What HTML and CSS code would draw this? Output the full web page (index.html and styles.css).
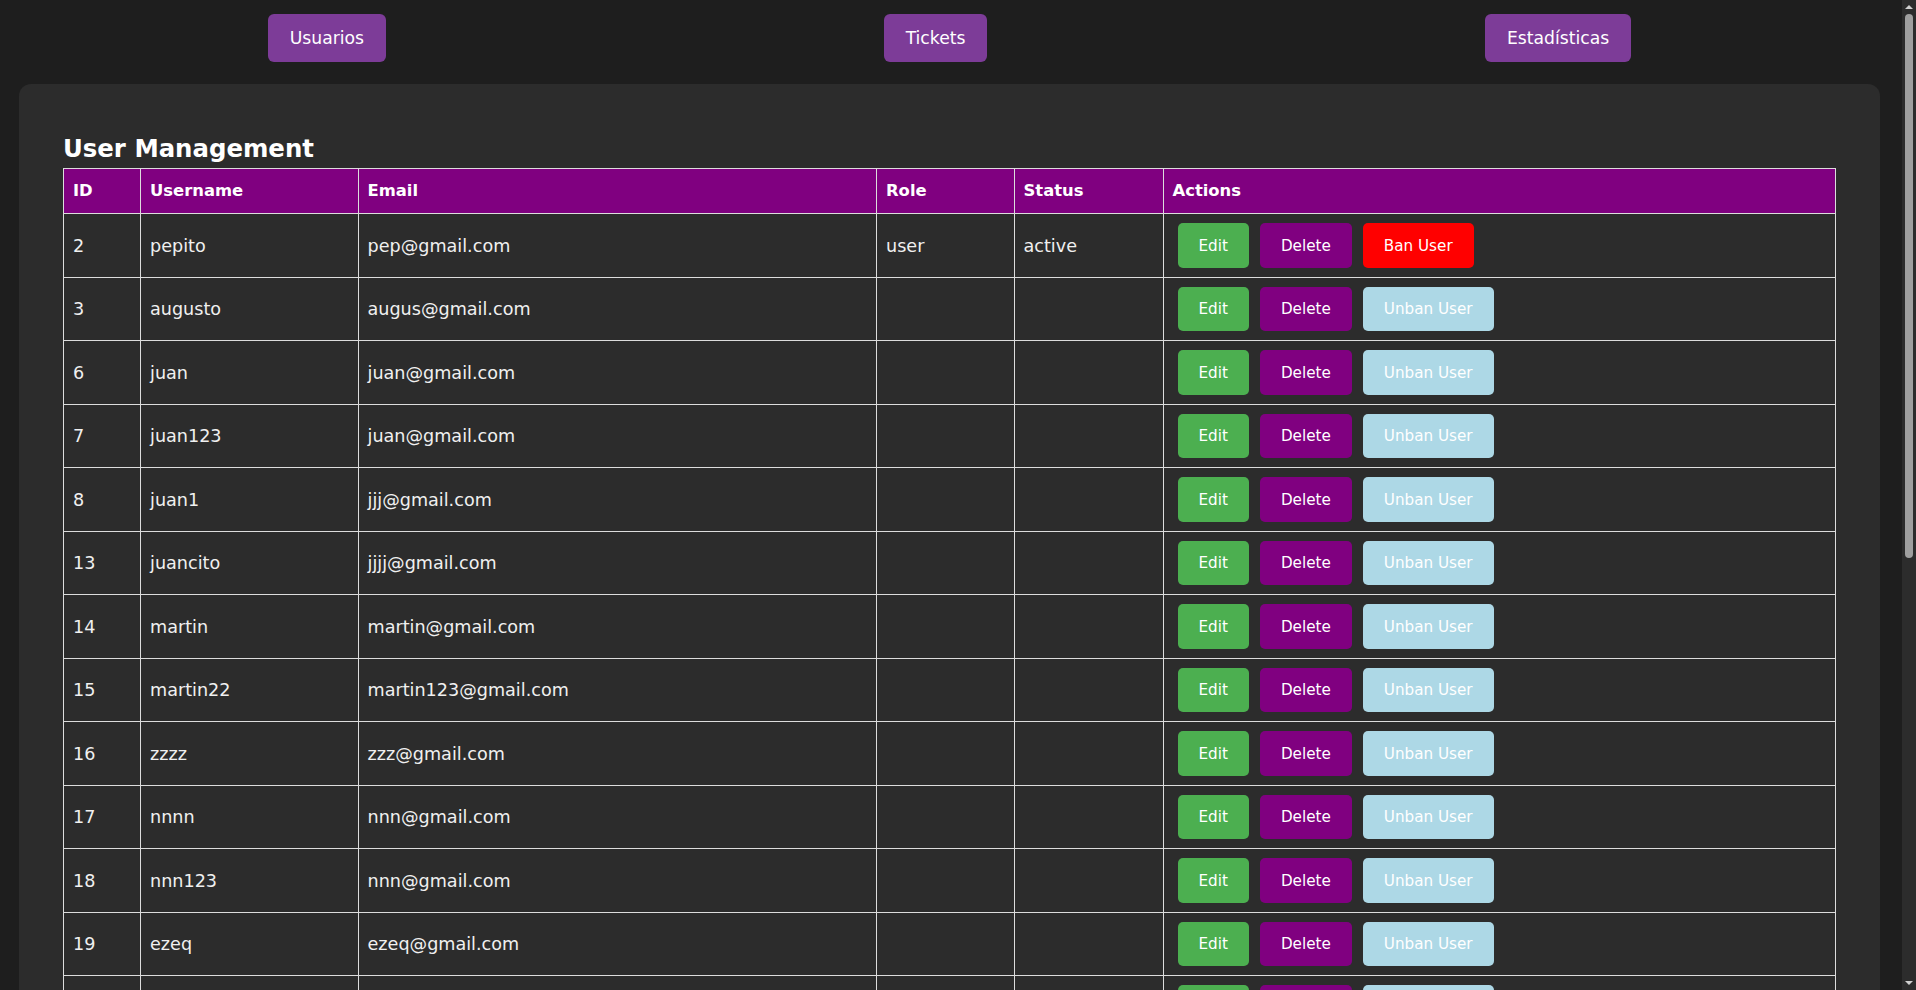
FILE: index.html
```html
<!DOCTYPE html>
<html lang="es">
<head>
<meta charset="utf-8">
<title>User Management</title>
<link rel="stylesheet" href="styles.css">
</head>
<body>
<div class="page">
  <nav class="nav">
    <button class="nav-btn">Usuarios</button>
    <button class="nav-btn">Tickets</button>
    <button class="nav-btn">Estadísticas</button>
  </nav>
  <main class="card">
    <h2 class="title">User Management</h2>
    <table class="users">
      <colgroup>
        <col class="c-id"><col class="c-user"><col class="c-email"><col class="c-role"><col class="c-status"><col class="c-actions">
      </colgroup>
      <thead>
        <tr><th>ID</th><th>Username</th><th>Email</th><th>Role</th><th>Status</th><th>Actions</th></tr>
      </thead>
      <tbody>
        <tr><td>2</td><td>pepito</td><td>pep@gmail.com</td><td>user</td><td>active</td><td><div class="actions"><button class="btn edit">Edit</button><button class="btn delete">Delete</button><button class="btn ban">Ban User</button></div></td></tr>
        <tr><td>3</td><td>augusto</td><td>augus@gmail.com</td><td></td><td></td><td><div class="actions"><button class="btn edit">Edit</button><button class="btn delete">Delete</button><button class="btn unban">Unban User</button></div></td></tr>
        <tr><td>6</td><td>juan</td><td>juan@gmail.com</td><td></td><td></td><td><div class="actions"><button class="btn edit">Edit</button><button class="btn delete">Delete</button><button class="btn unban">Unban User</button></div></td></tr>
        <tr><td>7</td><td>juan123</td><td>juan@gmail.com</td><td></td><td></td><td><div class="actions"><button class="btn edit">Edit</button><button class="btn delete">Delete</button><button class="btn unban">Unban User</button></div></td></tr>
        <tr><td>8</td><td>juan1</td><td>jjj@gmail.com</td><td></td><td></td><td><div class="actions"><button class="btn edit">Edit</button><button class="btn delete">Delete</button><button class="btn unban">Unban User</button></div></td></tr>
        <tr><td>13</td><td>juancito</td><td>jjjj@gmail.com</td><td></td><td></td><td><div class="actions"><button class="btn edit">Edit</button><button class="btn delete">Delete</button><button class="btn unban">Unban User</button></div></td></tr>
        <tr><td>14</td><td>martin</td><td>martin@gmail.com</td><td></td><td></td><td><div class="actions"><button class="btn edit">Edit</button><button class="btn delete">Delete</button><button class="btn unban">Unban User</button></div></td></tr>
        <tr><td>15</td><td>martin22</td><td>martin123@gmail.com</td><td></td><td></td><td><div class="actions"><button class="btn edit">Edit</button><button class="btn delete">Delete</button><button class="btn unban">Unban User</button></div></td></tr>
        <tr><td>16</td><td>zzzz</td><td>zzz@gmail.com</td><td></td><td></td><td><div class="actions"><button class="btn edit">Edit</button><button class="btn delete">Delete</button><button class="btn unban">Unban User</button></div></td></tr>
        <tr><td>17</td><td>nnnn</td><td>nnn@gmail.com</td><td></td><td></td><td><div class="actions"><button class="btn edit">Edit</button><button class="btn delete">Delete</button><button class="btn unban">Unban User</button></div></td></tr>
        <tr><td>18</td><td>nnn123</td><td>nnn@gmail.com</td><td></td><td></td><td><div class="actions"><button class="btn edit">Edit</button><button class="btn delete">Delete</button><button class="btn unban">Unban User</button></div></td></tr>
        <tr><td>19</td><td>ezeq</td><td>ezeq@gmail.com</td><td></td><td></td><td><div class="actions"><button class="btn edit">Edit</button><button class="btn delete">Delete</button><button class="btn unban">Unban User</button></div></td></tr>
        <tr><td>20</td><td>ezeq2</td><td>ezeq2@gmail.com</td><td></td><td></td><td><div class="actions"><button class="btn edit">Edit</button><button class="btn delete">Delete</button><button class="btn unban">Unban User</button></div></td></tr>
      </tbody>
    </table>
  </main>
</div>
<div class="scrollbar" aria-hidden="true">
  <div class="sb-arrow sb-up"></div>
  <div class="sb-track"><div class="sb-thumb"></div></div>
  <div class="sb-arrow sb-down"></div>
</div>
</body>
</html>
```
FILE: styles.css
```css
html {
  color-scheme: dark;
}

body {
  margin: 0;
  padding-right: 14px; /* room for the scrollbar gutter */
  background: #1e1e1e;
  font-family: "DejaVu Sans", "Noto Sans", sans-serif;
  color: #eeeeee;
}

.page {
  padding: 14px 22px 20px 19px;
}

.nav {
  display: flex;
  justify-content: space-around;
}

.nav-btn {
  height: 48px;
  padding: 0 22px;
  border: none;
  border-radius: 6px;
  background: #7d3c98;
  color: #ffffff;
  font-family: "DejaVu Sans", "Noto Sans", sans-serif;
  font-size: 17.2px;
}

.card {
  display: block;
  margin-top: 22px;
  background: #2c2c2c;
  border-radius: 12px;
  padding: 50px 44px 44px;
}

.title {
  margin: 0 0 4.4px;
  font-size: 24.4px;
  line-height: 30px;
  font-weight: bold;
  color: #ffffff;
}

.users {
  width: 100%;
  border-collapse: collapse;
  table-layout: fixed;
}

.c-id { width: 77px; }
.c-user { width: 217.5px; }
.c-email { width: 518.5px; }
.c-role { width: 137.5px; }
.c-status { width: 149px; }

.users th {
  background: #800080;
  color: #ffffff;
  font-weight: bold;
  font-size: 16.4px;
  line-height: 24px;
  text-align: left;
  padding: 10px 9px;
  border: 1px solid #dddddd;
}

.users td {
  padding: 9px;
  font-size: 17.6px;
  color: #f0f0f0;
  border: 1px solid #dddddd;
  vertical-align: middle;
  white-space: nowrap;
}

.actions {
  display: flex;
  gap: 11px;
  padding-left: 5px;
}

.btn {
  height: 44.5px;
  padding: 0 21px;
  border: none;
  border-radius: 5px;
  color: #ffffff;
  font-family: "DejaVu Sans", "Noto Sans", sans-serif;
  font-size: 15.2px;
}

.btn.edit { background: #4caf50; }
.btn.delete { background: #800080; }
.btn.ban { background: #ff0000; }
.btn.unban { background: #add8e6; }

/* window scrollbar drawn over the right edge */
.scrollbar {
  position: fixed;
  top: 0;
  right: 0;
  width: 14px;
  height: 100vh;
  background: #2c2c2c;
  display: flex;
  flex-direction: column;
}

.sb-arrow {
  height: 14px;
  display: flex;
  justify-content: center;
  align-items: center;
}

.sb-up::before,
.sb-down::before {
  content: "";
  width: 0;
  height: 0;
  border-left: 4.5px solid transparent;
  border-right: 4.5px solid transparent;
}

.sb-up::before {
  border-bottom: 4px solid #cfcfcf;
}

.sb-down::before {
  border-top: 4px solid #cfcfcf;
}

.sb-track {
  flex: 1;
  padding: 0 3px;
}

.sb-thumb {
  height: 544px;
  background: #9f9f9f;
  border-radius: 4px;
}
```
